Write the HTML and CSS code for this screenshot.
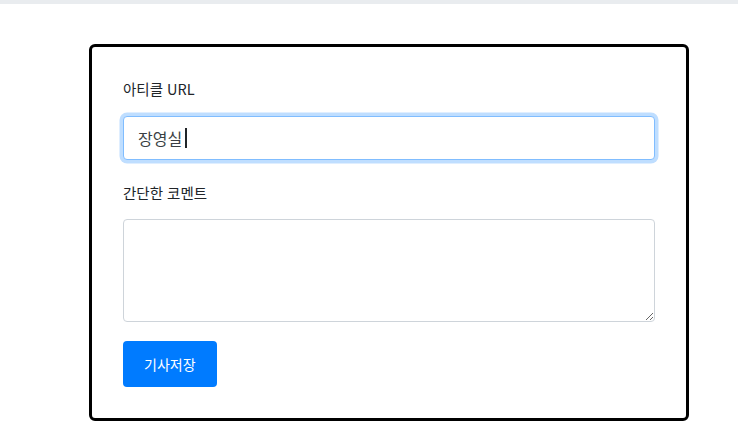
FILE: index.html
```html
<!DOCTYPE html>
<html lang="ko">
<head>
<meta charset="utf-8">
<title>기사저장</title>
<link rel="stylesheet" href="styles.css">
</head>
<body>
<div class="topbar"></div>
<form class="card">
  <div class="group">
    <label class="label" for="url">아티클 URL</label>
    <div class="field">
      <input class="control control-focus" id="url" type="text" value="장영실">
      <span class="caret"></span>
    </div>
  </div>
  <div class="group group-comment">
    <label class="label" for="comment">간단한 코멘트</label>
    <textarea class="control area" id="comment"></textarea>
  </div>
  <button class="btn" type="button">기사저장</button>
</form>
</body>
</html>
```

FILE: styles.css
```css
* { box-sizing: border-box; }
html, body { margin: 0; background: #fff; }
body {
  font-family: "Noto Sans CJK KR", "Noto Sans", sans-serif;
  color: #212529;
}
.topbar {
  height: 4px;
  background: #e9ecef;
}
.card {
  display: flex;
  flex-direction: column;
  align-items: flex-start;
  width: 600px;
  margin: 40px 0 0 89px;
  border: 3px solid #000;
  border-radius: 6px;
  padding: 30px 31px 31px;
}
.group {
  display: flex;
  flex-direction: column;
  width: 100%;
}
.group-comment { margin-top: 21px; }
.label {
  font-size: 14.5px;
  line-height: 24px;
  height: 24px;
  margin-bottom: 15px;
  color: #212529;
}
.group-comment .label { margin-bottom: 14px; }
.field {
  position: relative;
  width: 100%;
}
.control {
  width: 100%;
  height: 44px;
  border: 1px solid #ced4da;
  border-radius: 4px;
  padding: 0 14px;
  font-family: "Noto Sans CJK KR", "Noto Sans", sans-serif;
  font-size: 16px;
  color: #3a3f44;
  background: #fff;
  outline: none;
  display: block;
}
.control-focus {
  border-color: #80bdff;
  box-shadow: 0 0 0 3.5px rgba(0, 123, 255, 0.25);
}
.caret {
  position: absolute;
  left: 62px;
  top: 12px;
  width: 2px;
  height: 20px;
  background: #212529;
}
.area {
  height: 103px;
  padding: 8px 12px;
  resize: vertical;
}
.btn {
  margin-top: 19px;
  height: 46px;
  padding: 0 21px;
  border: none;
  border-radius: 4px;
  background: #007bff;
  color: #fff;
  font-family: "Noto Sans CJK KR", "Noto Sans", sans-serif;
  font-size: 14px;
  line-height: 46px;
}
```
